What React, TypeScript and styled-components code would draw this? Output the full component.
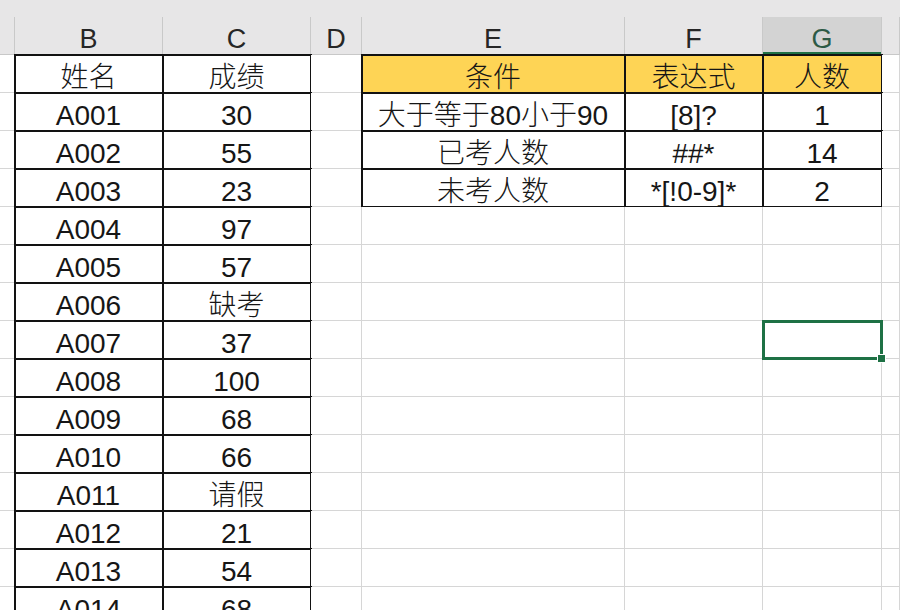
import React from 'react';
import styled, { createGlobalStyle, css } from 'styled-components';

const GlobalStyle = createGlobalStyle`
  html, body { margin: 0; padding: 0; background: #fff; }
  body { font-family: "Liberation Sans", "Noto Sans CJK SC", sans-serif; }
`;

const COLS = '15px 148px 148px 51px 263px 138px 119px 1fr';
const GRID = '#d6d6d6';
const GOLD = '#fed455';
const GREEN = '#1e7145';

const Sheet = styled.div`
  width: 900px;
  height: 610px;
  overflow: hidden;
  background: #fff;
`;

const HeaderBar = styled.div`
  display: grid;
  grid-template-columns: ${COLS};
  padding-top: 17px;
  background: #e7e6e7;
  border-bottom: 1px solid #c8c8c8;
`;

const HeaderCell = styled.div<{ $active?: boolean }>`
  box-sizing: border-box;
  height: 37px;
  border-right: 1px solid #c9c9c9;
  padding-top: 8px;
  line-height: 29px;
  text-align: center;
  font-size: 27px;
  color: #262626;
  ${p =>
    p.$active &&
    css`
      background: #d3d3d3;
      color: #2d5a45;
      box-shadow: inset 0 -2px 0 ${GREEN};
    `}
`;

const Row = styled.div`
  display: grid;
  grid-template-columns: ${COLS};
  height: 38px;
`;

const Cell = styled.div<{ $table?: boolean; $fill?: string; $selected?: boolean }>`
  box-sizing: border-box;
  height: 38px;
  border-right: 1px solid ${GRID};
  border-bottom: 1px solid ${GRID};
  padding-top: 7px;
  line-height: 31px;
  text-align: center;
  font-size: 28px;
  color: #161616;
  white-space: nowrap;
  background: ${p => p.$fill ?? '#fff'};
  ${p =>
    p.$table &&
    css`
      outline: 2px solid #121212;
      outline-offset: -1px;
    `}
  ${p =>
    p.$selected &&
    css`
      position: relative;
      outline: 3px solid ${GREEN};
      outline-offset: -2px;
      &::after {
        content: '';
        position: absolute;
        right: -5px;
        bottom: -5px;
        width: 7px;
        height: 7px;
        background: ${GREEN};
        border: 1px solid #fff;
        z-index: 2;
      }
    `}
`;

const Cjk = styled.span`
  font-family: "Noto Sans CJK SC", sans-serif;
  font-weight: 300;
  line-height: 0;
`;

const students: [string, string][] = [
  ['姓名', '成绩'],
  ['A001', '30'],
  ['A002', '55'],
  ['A003', '23'],
  ['A004', '97'],
  ['A005', '57'],
  ['A006', '缺考'],
  ['A007', '37'],
  ['A008', '100'],
  ['A009', '68'],
  ['A010', '66'],
  ['A011', '请假'],
  ['A012', '21'],
  ['A013', '54'],
  ['A014', '68'],
];

const criteria: [string, string, string][] = [
  ['条件', '表达式', '人数'],
  ['大于等于80小于90', '[8]?', '1'],
  ['已考人数', '##*', '14'],
  ['未考人数', '*[!0-9]*', '2'],
];

const isCjk = (s: string) => /[\u4e00-\u9fff]/.test(s);

const Text: React.FC<{ value: string }> = ({ value }) => {
  if (!isCjk(value)) return <>{value}</>;
  const parts = value.split(/([\u4e00-\u9fff]+)/).filter(Boolean);
  return (
    <>
      {parts.map((p, i) => (isCjk(p) ? <Cjk key={i}>{p}</Cjk> : <span key={i}>{p}</span>))}
    </>
  );
};

const SELECTED_ROW = 7;

export default function App() {
  return (
    <>
      <GlobalStyle />
      <Sheet>
        <HeaderBar>
          <HeaderCell />
          <HeaderCell>B</HeaderCell>
          <HeaderCell>C</HeaderCell>
          <HeaderCell>D</HeaderCell>
          <HeaderCell>E</HeaderCell>
          <HeaderCell>F</HeaderCell>
          <HeaderCell $active>G</HeaderCell>
          <HeaderCell />
        </HeaderBar>
        {students.map(([name, score], i) => {
          const crit = criteria[i];
          const fill = i === 0 ? GOLD : undefined;
          return (
            <Row key={i}>
              <Cell />
              <Cell $table>
                <Text value={name} />
              </Cell>
              <Cell $table>
                <Text value={score} />
              </Cell>
              <Cell />
              {crit ? (
                <>
                  <Cell $table $fill={fill}>
                    <Text value={crit[0]} />
                  </Cell>
                  <Cell $table $fill={fill}>
                    <Text value={crit[1]} />
                  </Cell>
                  <Cell $table $fill={fill}>
                    <Text value={crit[2]} />
                  </Cell>
                </>
              ) : (
                <>
                  <Cell />
                  <Cell />
                  <Cell $selected={i === SELECTED_ROW} />
                </>
              )}
              <Cell />
            </Row>
          );
        })}
      </Sheet>
    </>
  );
}
